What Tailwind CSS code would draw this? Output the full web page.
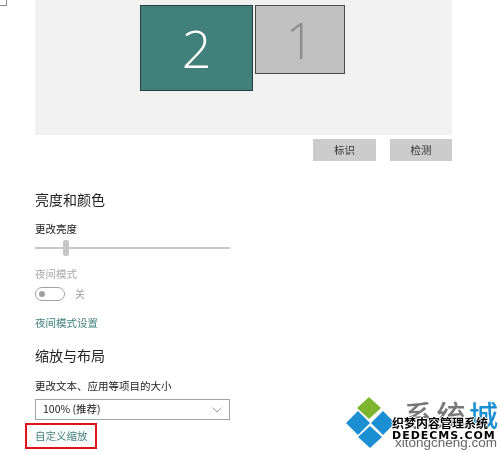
<!DOCTYPE html>
<html lang="zh-CN">
<head>
    <meta charset="UTF-8">
    <title>显示设置</title>
    <script src="https://cdn.jsdelivr.net/npm/@tailwindcss/browser@4"></script>
</head>
<body class="bg-white">
    <div class="relative w-[500px] h-[452px] overflow-hidden blur-[0.35px] font-['Noto_Sans_CJK_SC','Noto_Sans',sans-serif] text-[#1a1a1a]">
        <!-- stray corner of the window -->
        <div class="absolute left-0 top-0 w-[7px] h-[6px] border-r border-b border-[#8a8a8a]"></div>

        <div class="pl-[35px] w-[452px]">
            <!-- monitor arrangement -->
            <div class="h-[135px] bg-[#f1f1f1] pl-[105px] pt-[5px] flex items-start gap-[2px]">
                <div class="w-[113px] h-[86px] bg-[#41807b] border border-[#253f3e] flex items-center justify-center text-white text-[52px] font-['Open_Sans'] font-light leading-none">2</div>
                <div class="w-[90px] h-[69px] bg-[#c0c0c0] border border-[#4a4a4a] flex items-center justify-center text-[#8c8c8c] text-[50px] font-['Open_Sans'] font-light leading-none">1</div>
            </div>

            <div class="mt-[4px] flex justify-end gap-[14px]">
                <button class="w-[63px] h-[22px] bg-[#cccccc] text-[10.5px] leading-none text-[#333333]">标识</button>
                <button class="w-[62px] h-[22px] bg-[#cccccc] text-[10.5px] leading-none text-[#333333]">检测</button>
            </div>

            <!-- brightness -->
            <h2 class="mt-[28px] text-[14px] leading-[20px] font-normal text-[#222222]">亮度和颜色</h2>
            <p class="mt-[13px] text-[10.5px] leading-[14px] text-[#222222]">更改亮度</p>
            <div class="relative mt-[4px] w-[195px] h-[16px] flex items-center">
                <div class="w-full h-[2px] bg-[#c9c9c9]"></div>
                <div class="absolute left-[28px] top-0 w-[6px] h-[16px] rounded-[2px] bg-[#c6c6c6]"></div>
            </div>
            <p class="mt-[11px] text-[10.5px] leading-[14px] text-[#a8a8a8]">夜间模式</p>
            <div class="mt-[6px] flex items-center gap-[10px]">
                <div class="w-[30px] h-[14px] rounded-full border-[1.5px] border-[#a0a0a0] flex items-center pl-[3px]">
                    <div class="w-[6px] h-[6px] rounded-full bg-[#a0a0a0]"></div>
                </div>
                <span class="text-[10px] leading-[14px] text-[#a0a0a0]">关</span>
            </div>
            <a class="block mt-[15px] text-[10.5px] leading-[14px] text-[#3f7f7c]">夜间模式设置</a>

            <!-- scale and layout -->
            <h2 class="mt-[15px] text-[14px] leading-[20px] font-normal text-[#222222]">缩放与布局</h2>
            <p class="mt-[14px] text-[10.5px] leading-[14px] text-[#222222]">更改文本、应用等项目的大小</p>
            <div class="mt-[6px] w-[195px] h-[21px] border-[1.5px] border-[#a3a3a3] flex items-center justify-between pl-[7px] pr-[7px]">
                <span class="text-[10.5px] leading-none text-[#222222]">100% (推荐)</span>
                <svg width="10" height="6" viewBox="0 0 10 6" fill="none" stroke="#a0a0a0" stroke-width="1"><path d="M0.5 0.5 L5 5 L9.5 0.5"/></svg>
            </div>
            <a class="block mt-[9px] text-[10.5px] leading-[14px] text-[#3f7f7c]">自定义缩放</a>
        </div>

        <!-- red annotation box -->
        <div class="absolute left-[25px] top-[423px] w-[72px] h-[26px] border-[2px] border-[#e0141c]"></div>

        <!-- watermark logo -->
        <svg class="absolute left-[345px] top-[396px]" width="52" height="54" viewBox="0 0 52 54">
            <polygon points="24,1 36,12 24,23 12,12" fill="#7db52c"/>
            <polygon points="13,15 25,27 13,39 1,27" fill="#1b8fd2"/>
            <polygon points="38,15 50,27 38,39 26,27" fill="#1b8fd2"/>
            <polygon points="25,30 37,41 25,52 13,41" fill="#1b8fd2"/>
        </svg>
        <div class="absolute left-[404px] top-[398px] w-[94px] flex justify-between text-[29px] leading-[32px] font-medium text-[#777777]">
            <span>系</span><span>统</span><span class="text-[#1b8fd2]">城</span>
        </div>
        <div class="absolute left-[395px] top-[435px] text-[13.5px] leading-[16px] text-[#666666] font-['Liberation_Sans'] whitespace-nowrap">xitongcheng.com</div>
        <div class="absolute left-[392px] top-[416px] text-[12px] leading-[14px] font-bold text-black whitespace-nowrap [text-shadow:1px_0_0_#fff,-1px_0_0_#fff,0_1px_0_#fff,0_-1px_0_#fff]">织梦内容管理系统</div>
        <div class="absolute left-[392px] top-[430px] text-[11px] leading-[12px] font-bold tracking-[1px] text-black whitespace-nowrap font-['DejaVu_Sans'] [text-shadow:1px_0_0_#fff,-1px_0_0_#fff,0_1px_0_#fff,0_-1px_0_#fff]">DEDECMS.COM</div>
    </div>
</body>
</html>
